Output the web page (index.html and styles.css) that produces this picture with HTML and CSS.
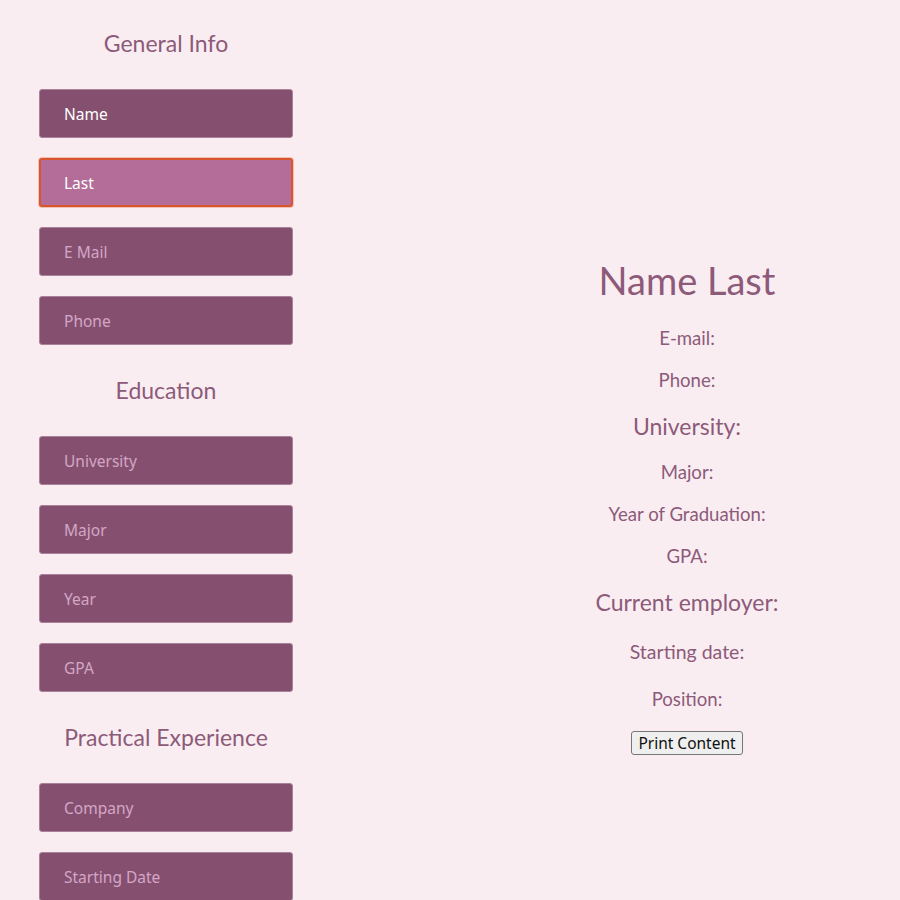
FILE: index.html
```html
<!DOCTYPE html>
<html>
<head>
<meta charset="utf-8">
<link rel="stylesheet" href="styles.css">
</head>
<body>
<div class="page">
  <form class="form">
    <h2 class="section-title">General Info</h2>
    <input class="field" type="text" value="Name" placeholder="Name">
    <input class="field focused" type="text" value="Last" placeholder="Last">
    <input class="field" type="text" placeholder="E Mail">
    <input class="field last-in-group" type="text" placeholder="Phone">
    <h2 class="section-title">Education</h2>
    <input class="field" type="text" placeholder="University">
    <input class="field" type="text" placeholder="Major">
    <input class="field" type="text" placeholder="Year">
    <input class="field last-in-group" type="text" placeholder="GPA">
    <h2 class="section-title">Practical Experience</h2>
    <input class="field" type="text" placeholder="Company">
    <input class="field" type="text" placeholder="Starting Date">
    <input class="field" type="text" placeholder="Position">
  </form>
  <section class="preview">
    <h1 class="full-name">Name Last</h1>
    <p class="line email">E-mail:</p>
    <p class="line">Phone:</p>
    <h3 class="big-line">University:</h3>
    <p class="line">Major:</p>
    <p class="line">Year of Graduation:</p>
    <p class="line">GPA:</p>
    <h3 class="big-line">Current employer:</h3>
    <h4 class="mid-line">Starting date:</h4>
    <p class="line position">Position:</p>
    <button class="print-btn" type="button">Print Content</button>
  </section>
</div>
</body>
</html>
```
FILE: styles.css
```css
html, body {
  margin: 0;
  padding: 0;
  background: #f9edf1;
}
body {
  font-family: Lato, "Open Sans", sans-serif;
  color: #8d5a7a;
}
.page {
  display: grid;
  grid-template-columns: 332px 1fr;
}
.form {
  display: flex;
  flex-direction: column;
  align-items: center;
  padding-top: 28px;
}
.section-title {
  margin: 0 0 31px 0;
  font-weight: 400;
  font-size: 23px;
  line-height: 30px;
  height: 30px;
  color: #8d5a7a;
}
.field {
  box-sizing: border-box;
  width: 254px;
  height: 49px;
  margin: 0 0 20px 0;
  padding: 0 24px;
  border: 1px solid #a98299;
  border-radius: 3px;
  background: #85506f;
  color: #ffffff;
  font-family: "Noto Sans", "Open Sans", sans-serif;
  font-size: 15.5px;
  outline: none;
}
.field::placeholder {
  color: #d4a6c6;
}
.field.focused {
  background: #b36d98;
  border: 2px solid #d8552f;
  box-shadow: 0 0 0 1px #f0c0b0;
  padding-left: 23px;
}
.field.last-in-group { margin-bottom: 30px; }
.preview {
  display: flex;
  flex-direction: column;
  align-items: center;
  padding-left: 142px;
  padding-top: 258px;
}
.full-name {
  margin: 0;
  font-weight: 400;
  font-size: 38px;
  line-height: 44px;
  color: #8d5a7a;
}
.line {
  margin: 0;
  font-size: 18.6px;
  line-height: 42px;
  color: #8d5a7a;
}
.line.email { margin-top: 15px; }
.big-line {
  margin: 0;
  font-weight: 400;
  font-size: 23px;
  line-height: 50px;
  color: #8d5a7a;
}
.mid-line {
  margin: 0;
  font-weight: 400;
  font-size: 19.5px;
  line-height: 50px;
  color: #8d5a7a;
}
.line.position { line-height: 44px; }
.print-btn {
  margin-top: 10px;
  font-family: "Noto Sans", "Open Sans", sans-serif;
  font-size: 15.5px;
  color: #111;
  background: #efefef;
  border: 1px solid #767676;
  border-radius: 3px;
  padding: 0 6px;
  height: 24px;
}
```
